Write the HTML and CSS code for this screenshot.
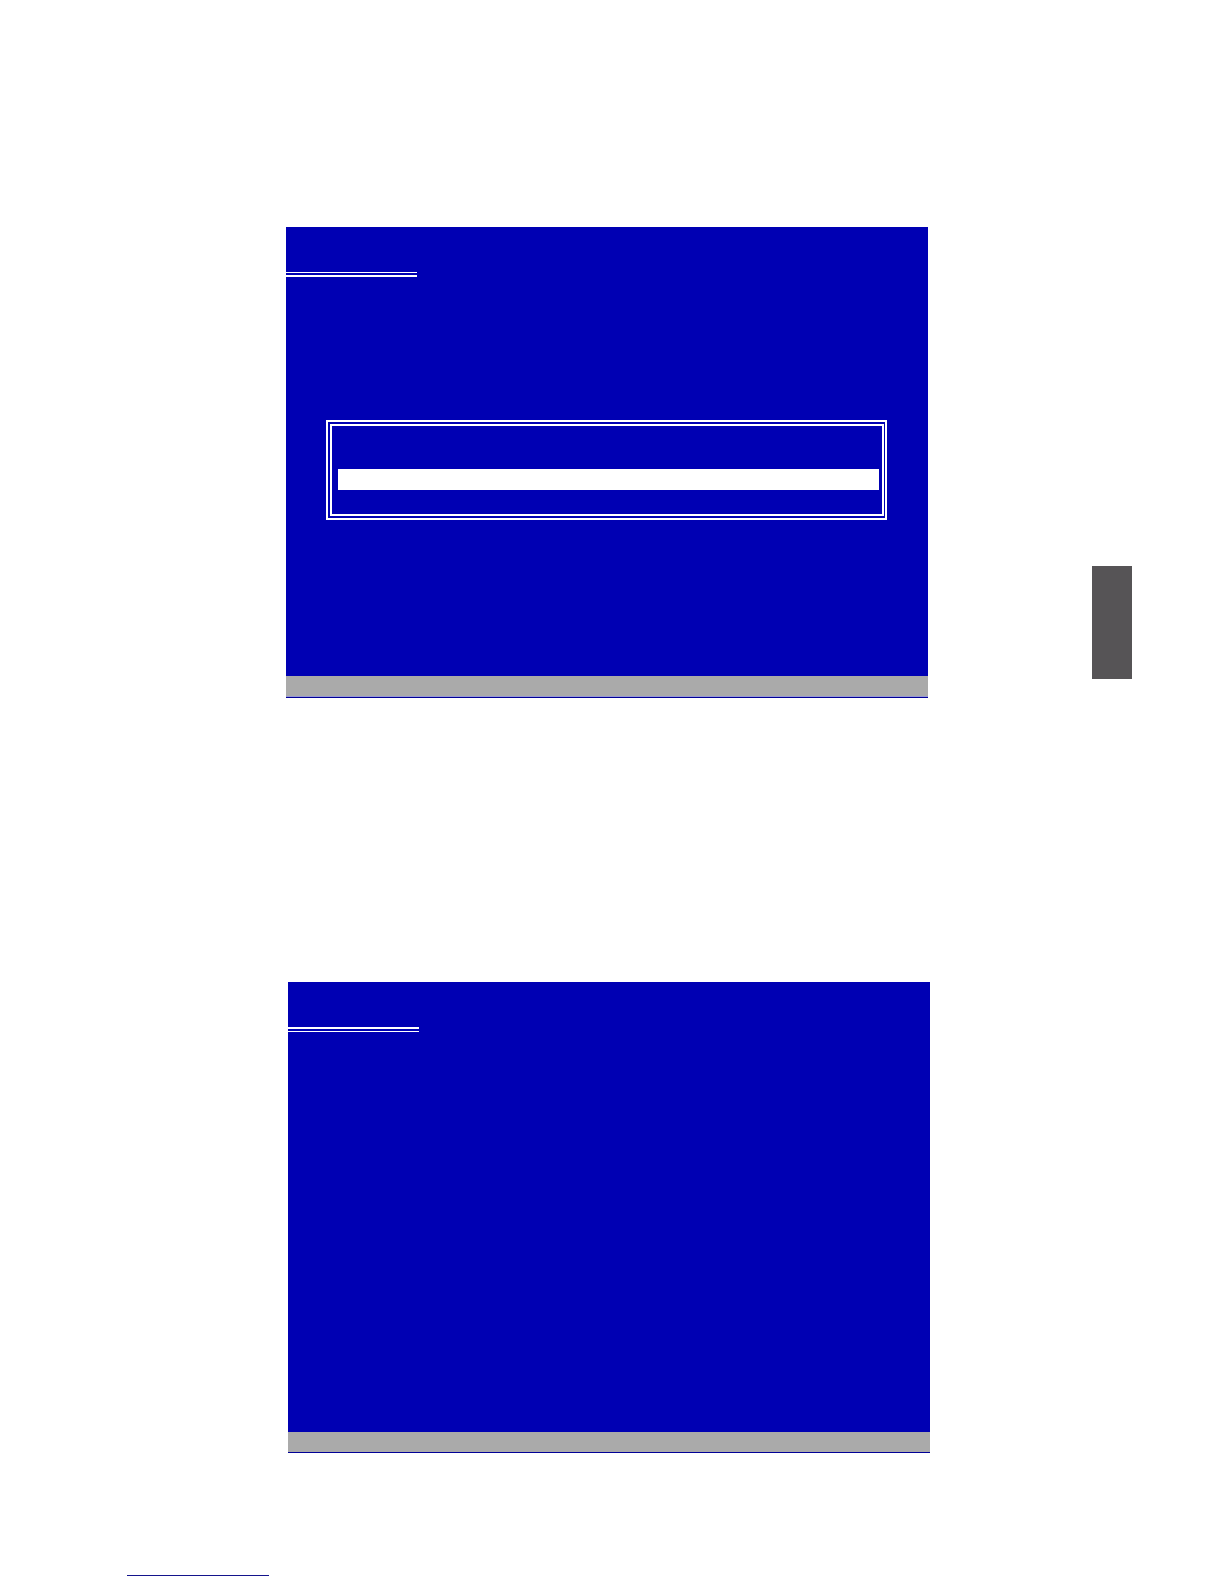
FILE: index.html
```html
<!DOCTYPE html>
<html lang="en">
<head>
<meta charset="utf-8">
<meta name="viewport" content="width=device-width, initial-scale=1">
<title>Setup screens</title>
<link rel="stylesheet" href="styles.css">
</head>
<body>
<main class="page">
  <div class="row row-first">
    <section class="screen">
      <div class="title-rule"></div>
      <div class="content">
        <div class="dialog">
          <div class="selection"></div>
        </div>
      </div>
      <div class="status-bar"></div>
    </section>
    <aside class="chapter-tab"></aside>
  </div>
  <div class="row row-second">
    <section class="screen">
      <div class="title-rule title-rule-heavy-top"></div>
      <div class="content"></div>
      <div class="status-bar status-bar-short"></div>
    </section>
  </div>
  <footer class="footer">
    <div class="footer-rule"></div>
  </footer>
</main>
</body>
</html>
```

FILE: styles.css
```css
* {
  box-sizing: border-box;
}

body {
  margin: 0;
  background: #ffffff;
  font-family: "Liberation Sans", sans-serif;
}

.page {
  display: flex;
  flex-direction: column;
  min-height: 100vh;
  padding: 227px 0 8px;
}

.row {
  display: grid;
}

.row-first {
  grid-template-columns: 286fr 642fr 164fr 40fr 92fr;
  margin-bottom: 284px;
}

.row-second {
  grid-template-columns: 288fr 642fr 294fr;
}

.screen {
  grid-column: 2;
  display: flex;
  flex-direction: column;
  min-height: 471px;
  padding-top: 45px;
  background: #0000b3;
  border-bottom: 1px solid #000096;
}

/* Double line under the screen title: one thin and one heavy stroke */
.title-rule {
  width: 131px;
  height: 5px;
  border-top: 1px solid #ffffff;
  border-bottom: 2px solid #ffffff;
}

.title-rule-heavy-top {
  border-top-width: 2px;
  border-bottom-width: 1px;
}

.content {
  flex: 1;
  padding: 143px 41px 0 40px;
}

.dialog {
  padding: 43px 3px 24px 6px;
  border: 6px double #ffffff;
  border-right-width: 5px;
}

.selection {
  height: 21px;
  background: #ffffff;
}

.status-bar {
  height: 21px;
  background: #aaaaaa;
  border-bottom: 1px solid #9898d4;
}

.status-bar-short {
  height: 20px;
  border-bottom: 0;
}

.chapter-tab {
  grid-column: 4;
  height: 113px;
  margin-top: 339px;
  background: #565456;
}

.footer {
  display: grid;
  grid-template-columns: 127fr 142fr 955fr;
  margin-top: auto;
}

.footer-rule {
  grid-column: 2;
  height: 1px;
  background: #14148c;
}
```
